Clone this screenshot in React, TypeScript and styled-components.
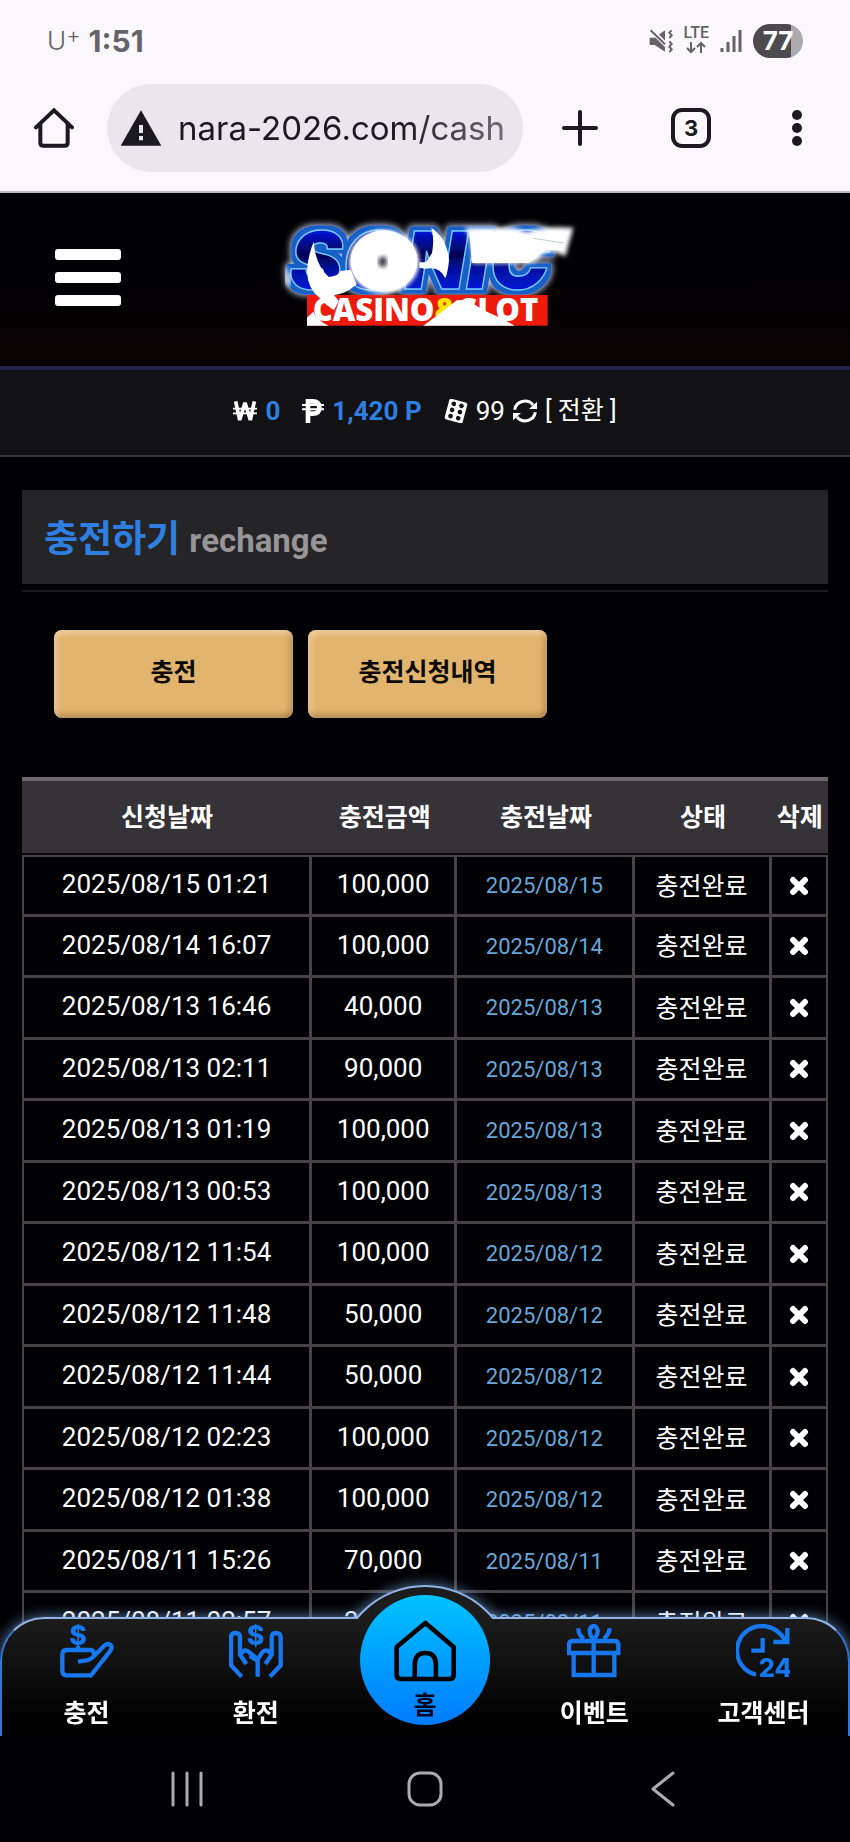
import React, { ReactNode, useState } from 'react'
import styled, { createGlobalStyle, ThemeProvider } from 'styled-components'

interface IDeposit {
    requested: string
    amount: string
    charged: string
}

const theme = {
    chromeBg: '#faf8fd',
    chromeInk: '#1b1a20',
    statusInk: '#656367',
    pageBg: '#010003',
    blue: '#2f7fe0',
    navBlue: '#1677ee',
    line: '#454347',
}

const DEPOSITS: IDeposit[] = [
    { requested: '2025/08/15 01:21', amount: '100,000', charged: '2025/08/15' },
    { requested: '2025/08/14 16:07', amount: '100,000', charged: '2025/08/14' },
    { requested: '2025/08/13 16:46', amount: '40,000', charged: '2025/08/13' },
    { requested: '2025/08/13 02:11', amount: '90,000', charged: '2025/08/13' },
    { requested: '2025/08/13 01:19', amount: '100,000', charged: '2025/08/13' },
    { requested: '2025/08/13 00:53', amount: '100,000', charged: '2025/08/13' },
    { requested: '2025/08/12 11:54', amount: '100,000', charged: '2025/08/12' },
    { requested: '2025/08/12 11:48', amount: '50,000', charged: '2025/08/12' },
    { requested: '2025/08/12 11:44', amount: '50,000', charged: '2025/08/12' },
    { requested: '2025/08/12 02:23', amount: '100,000', charged: '2025/08/12' },
    { requested: '2025/08/12 01:38', amount: '100,000', charged: '2025/08/12' },
    { requested: '2025/08/11 15:26', amount: '70,000', charged: '2025/08/11' },
    { requested: '2025/08/11 02:57', amount: '30,000', charged: '2025/08/11' },
]

function App() {
    const [deposits, setDeposits] = useState(DEPOSITS)

    const onDelete = (requested: string) => {
        setDeposits((rows) => rows.filter((row) => row.requested !== requested))
    }

    return (
        <ThemeProvider theme={theme}>
            <GlobalStyle />
            <Screen>
                <StatusBar />
                <AddressBar />
                <SiteHeader>
                    <MenuButton aria-label='menu'>
                        <MenuLine />
                        <MenuLine />
                        <MenuLine />
                    </MenuButton>
                    <LogoLink href='#home' aria-label='home'>
                        <Logo />
                    </LogoLink>
                </SiteHeader>
                <PointBar />
                <Content>
                    <PageTitle>
                        충전하기 <small>rechange</small>
                    </PageTitle>
                    <Actions>
                        <GoldButton>충전</GoldButton>
                        <GoldButton>충전신청내역</GoldButton>
                    </Actions>
                    <DepositTable deposits={deposits} onDelete={onDelete} />
                </Content>
            </Screen>
            <Dock>
                <BottomNav />
                <SystemBar />
            </Dock>
        </ThemeProvider>
    )
}

function StatusBar() {
    return (
        <StatusRow>
            <Carrier>
                U<sup>+</sup>
            </Carrier>
            <Clock>1:51</Clock>
            <StatusIcons>
                <svg width='24' height='24' viewBox='0 0 72 72'>
                    <path d='M2 26 H17 L48 4 V68 L17 48 H2 Z' fill='#656367' />
                    <path d='M4 2 L52 48' stroke='#faf8fd' strokeWidth='14' />
                    <path d='M5 4 L48 46' stroke='#656367' strokeWidth='6' />
                    <path
                        d='M68 4 l-7 7 7 8 -7 8 M61 37 l7 8 -7 8 7 8 -7 8'
                        fill='none'
                        stroke='#656367'
                        strokeWidth='6'
                    />
                </svg>
                <Lte>
                    LTE
                    <svg width='20' height='13' viewBox='0 0 20 13'>
                        <path
                            d='M5 1 V11 M1 7 L5 11 L9 7 M15 12 V2 M11 6 L15 2 L19 6'
                            fill='none'
                            stroke='#656367'
                            strokeWidth='2'
                        />
                    </svg>
                </Lte>
                <svg width='22' height='24' viewBox='0 0 22 24'>
                    <path d='M2 19 V23 M8 13 V23 M14 7 V23 M20 1 V23' stroke='#656367' strokeWidth='3' />
                </svg>
                <Battery>77</Battery>
            </StatusIcons>
        </StatusRow>
    )
}

function AddressBar() {
    return (
        <AddressRow>
            <ChromeButton aria-label='home page'>
                <svg width='40' height='40' viewBox='0 0 120 120'>
                    <path
                        d='M6 58 L60 7 L114 58 M19 48 V104 Q19 113 28 113 H92 Q101 113 101 104 V48'
                        fill='none'
                        stroke='#1b1a20'
                        strokeWidth='12'
                        strokeLinecap='round'
                        strokeLinejoin='miter'
                    />
                </svg>
            </ChromeButton>
            <UrlPill>
                <svg width='42' height='36' viewBox='0 0 126 106'>
                    <path d='M63 0 L124 106 H2 Z' fill='#1b1a20' />
                    <path d='M63 44 V68 M63 77 V90' stroke='#e9e7ec' strokeWidth='12' />
                </svg>
                <UrlInput aria-label='address' defaultValue='nara-2026.com/cash' />
            </UrlPill>
            <ChromeButton aria-label='new tab'>
                <svg width='36' height='36' viewBox='0 0 36 36'>
                    <path d='M18 2 V34 M2 18 H34' stroke='#1b1a20' strokeWidth='4' strokeLinecap='round' />
                </svg>
            </ChromeButton>
            <TabsButton aria-label='tabs'>3</TabsButton>
            <ChromeButton aria-label='more'>
                <svg width='24' height='40' viewBox='0 0 24 40'>
                    <circle cx='12' cy='7' r='5' fill='#1b1a20' />
                    <circle cx='12' cy='20' r='5' fill='#1b1a20' />
                    <circle cx='12' cy='33' r='5' fill='#1b1a20' />
                </svg>
            </ChromeButton>
        </AddressRow>
    )
}

function Logo() {
    return (
        <svg width='330' height='150' viewBox='0 0 990 450'>
            <defs>
                <filter id='soft' x='-10%' y='-20%' width='120%' height='140%'>
                    <feGaussianBlur stdDeviation='6' />
                </filter>
                {/* blue rim with a pale halo round the word */}
                <filter id='rim' x='-10%' y='-20%' width='120%' height='140%'>
                    <feMorphology in='SourceAlpha' operator='dilate' radius='15' result='wide' />
                    <feGaussianBlur in='wide' stdDeviation='9' result='haze' />
                    <feFlood floodColor='#b3c0dc' />
                    <feComposite in2='haze' operator='in' result='halo' />
                    <feMorphology in='SourceAlpha' operator='dilate' radius='11' result='edge' />
                    <feGaussianBlur in='edge' stdDeviation='2' result='edgeSoft' />
                    <feFlood floodColor='#1560c8' />
                    <feComposite in2='edgeSoft' operator='in' result='blueRim' />
                    <feMerge>
                        <feMergeNode in='halo' />
                        <feMergeNode in='blueRim' />
                        <feMergeNode in='SourceGraphic' />
                    </feMerge>
                </filter>
                <linearGradient id='navy' x1='0' y1='0' x2='0' y2='1'>
                    <stop offset='0.200' stopColor='#0614d8' />
                    <stop offset='0.450' stopColor='#010350' />
                    <stop offset='0.600' stopColor='#0210a0' />
                    <stop offset='0.850' stopColor='#0618e0' />
                </linearGradient>
            </defs>
            <LogoWord x='88' y='265' fill='url(#navy)' stroke='#74c8ff' strokeWidth='4' filter='url(#rim)'>
                SONIC
            </LogoWord>
            <rect x='141' y='282' width='722' height='92' fill='#ee1a0c' />
            <LogoTag x='158' y='361' fill='#fff'>
                CASINO<tspan fill='#ffe600'>&amp;</tspan>SLOT
            </LogoTag>
            <g fill='#fff'>
                <ellipse cx='372' cy='182' rx='106' ry='95' filter='url(#soft)' />
                <ellipse cx='372' cy='180' rx='100' ry='92' />
                <path d='M161 122 Q142 170 141 212 Q143 262 178 290 L200 312 L222 328 L236 300 L222 282 Q256 280 290 250 L272 206 L242 210 Q234 226 206 228 Q166 192 161 122 Z' />
                <path d='M514 80 Q562 112 567 178 Q564 212 556 232 Q540 200 512 202 L494 203 L478 200 V184 L498 184 L516 156 Q524 110 514 80 Z' />
                <path
                    d='M616 80 H760 L800 92 Q850 74 940 80 L916 166 L886 152 Q850 150 838 172 Q828 186 800 187 H636 Q640 130 616 80 Z'
                    filter='url(#soft)'
                />
                <path d='M628 94 H770 L810 104 Q860 90 920 94 L900 148 Q850 140 834 164 L806 186 H636 Z' />
                <path d='M141 374 V350 L160 332 Q168 356 206 374 Z' />
                <path d='M490 374 L560 322 L590 298 L622 296 L668 326 L720 350 L764 374 Z' />
            </g>
            <path d='M820 112 L912 126' stroke='#9bb7ac' strokeWidth='2' />
            <ellipse cx='368' cy='182' rx='13' ry='16' fill='#3d3f4d' filter='url(#soft)' />
            <path d='M78 200 V250 M90 216 V256' stroke='#fff' strokeWidth='8' filter='url(#soft)' />
        </svg>
    )
}

function PointBar() {
    return (
        <PointRow>
            <svg width='24' height='22' viewBox='0 0 72 66'>
                <path
                    d='M8 4 L20 60 L36 8 L52 60 L64 4'
                    fill='none'
                    stroke='#fff'
                    strokeWidth='11'
                    strokeLinejoin='bevel'
                />
                <path d='M0 26 H72 M0 40 H72' stroke='#fff' strokeWidth='5' />
            </svg>
            <Amount>0</Amount>
            <UnitIcon width='22' height='24' viewBox='0 0 66 72'>
                <path d='M18 72 V7 H32 Q52 7 52 26 Q52 44 32 44 H18' fill='none' stroke='#fff' strokeWidth='14' />
                <path d='M0 18 H66 M0 31 H66' stroke='#fff' strokeWidth='6' />
            </UnitIcon>
            <Amount>1,420 P</Amount>
            <UnitIcon width='24' height='24' viewBox='0 0 72 72'>
                <g transform='rotate(15 36 36)'>
                    <rect x='8' y='4' width='56' height='64' rx='7' fill='#fff' />
                    <g fill='#121114'>
                        <circle cx='24' cy='17' r='7' />
                        <circle cx='48' cy='17' r='7' />
                        <circle cx='24' cy='36' r='7' />
                        <circle cx='48' cy='36' r='7' />
                        <circle cx='24' cy='55' r='7' />
                        <circle cx='48' cy='55' r='7' />
                    </g>
                </g>
            </UnitIcon>
            <span>99</span>
            <svg width='24' height='24' viewBox='0 0 72 72'>
                <path
                    d='M5 32 A31 30 0 0 1 60 18 M67 40 A31 30 0 0 1 12 54'
                    fill='none'
                    stroke='#fff'
                    strokeWidth='9'
                />
                <path d='M72 8 V30 H48 Z M0 64 V42 H24 Z' fill='#fff' />
            </svg>
            <SwapLink href='#swap'>[ 전환 ]</SwapLink>
        </PointRow>
    )
}

function DepositTable({ deposits, onDelete }: { deposits: IDeposit[]; onDelete: (requested: string) => void }) {
    return (
        <Table>
            <colgroup>
                <Col $share={36} />
                <Col $share={18} />
                <Col $share={22} />
                <Col $share={17} />
                <Col $share={7} />
            </colgroup>
            <thead>
                <tr>
                    <HeadCell scope='col'>신청날짜</HeadCell>
                    <HeadCell scope='col'>충전금액</HeadCell>
                    <HeadCell scope='col'>충전날짜</HeadCell>
                    <HeadCell scope='col'>상태</HeadCell>
                    <HeadCell scope='col'>삭제</HeadCell>
                </tr>
            </thead>
            <tbody>
                {deposits.map(({ requested, amount, charged }) => (
                    <BodyRow key={requested}>
                        <TextCell>{requested}</TextCell>
                        <TextCell>{amount}</TextCell>
                        <DateCell>{charged}</DateCell>
                        <StateCell>충전완료</StateCell>
                        <Cell>
                            <DeleteButton aria-label={`${requested} 삭제`} onClick={() => onDelete(requested)}>
                                <svg width='20' height='20' viewBox='0 0 20 20'>
                                    <path
                                        d='M4 4 L16 16 M16 4 L4 16'
                                        stroke='#fff'
                                        strokeWidth='6'
                                        strokeLinecap='round'
                                    />
                                </svg>
                            </DeleteButton>
                        </Cell>
                    </BodyRow>
                ))}
            </tbody>
        </Table>
    )
}

function BottomNav() {
    return (
        <Nav>
            <Bump />
            <NavItem id='charge' label='충전'>
                <path d='M54 113 L80 109 Q92 106 100 98 L134 64 Q144 56 152 63 Q158 70 150 82 L93 154 H20 Q7 154 7 141 V91 Q7 78 20 78 H92 Q104 80 102 94 M54 66 V78' />
                <NavGlyph x='54' y='63' fontSize='80' textAnchor='middle'>
                    $
                </NavGlyph>
            </NavItem>
            <NavItem id='withdraw' label='환전'>
                <path d='M38 158 L6 124 V40 Q6 27 20 27 Q33 27 33 40 V92 L52 120 M36 90 Q48 70 62 86 L86 106 V158 M62 96 L86 110' />
                <path d='M123 158 L155 124 V40 Q155 27 141 27 Q128 27 128 40 V92 L109 120 M125 90 Q113 70 99 86 L86 106' />
                <NavGlyph x='80' y='63' fontSize='80' textAnchor='middle'>
                    $
                </NavGlyph>
            </NavItem>
            <HomeSlot>
                <HomeLink href='#home'>
                    <svg width='62' height='62' viewBox='280 150 188 188'>
                        <path
                            d='M375 159 L461 232 V315 Q461 329 447 329 H302 Q288 329 288 315 V232 Z M343 329 V285 Q343 250 375 250 Q407 250 407 285 V329'
                            fill='none'
                            stroke='#000'
                            strokeWidth='14'
                            strokeLinejoin='round'
                        />
                    </svg>
                    홈
                </HomeLink>
            </HomeSlot>
            <NavItem id='event' label='이벤트'>
                <path d='M6 87 V62 Q6 51 18 51 H142 Q154 51 154 62 V87 Z M20 90 V153 H142 V90 M80 51 V153' />
                <path d='M80 48 Q66 30 68 18 Q72 6 80 6 Q88 6 92 18 Q94 30 80 48 M34 13 Q34 32 50 45 M128 13 Q126 32 110 45' />
            </NavItem>
            <NavItem id='support' label='고객센터'>
                <path d='M60 152 A74 74 0 0 1 78 6 Q122 6 150 52 M154 12 V54 H112 M80 42 V80 H46' />
                <NavGlyph x='68' y='159' fontSize='76'>
                    24
                </NavGlyph>
            </NavItem>
        </Nav>
    )
}

function NavItem({ id, label, children }: { id: string; label: string; children: ReactNode }) {
    return (
        <NavLink href={`#${id}`}>
            <NavIcon width='54' height='54' viewBox='0 0 162 162'>
                {children}
            </NavIcon>
            {label}
        </NavLink>
    )
}

function SystemBar() {
    return (
        <SystemRow>
            <SystemButton aria-label='recent apps'>
                <svg width='36' height='36' viewBox='0 0 36 36'>
                    <path d='M4 2 V34 M18 2 V34 M32 2 V34' stroke='#aeabae' strokeWidth='3' strokeLinecap='round' />
                </svg>
            </SystemButton>
            <SystemButton aria-label='home screen'>
                <svg width='36' height='36' viewBox='0 0 36 36'>
                    <rect x='2' y='2' width='32' height='32' rx='11' fill='none' stroke='#aeabae' strokeWidth='3' />
                </svg>
            </SystemButton>
            <SystemButton aria-label='back'>
                <svg width='36' height='36' viewBox='0 0 36 36'>
                    <path
                        d='M28 2 L8 18 L28 34'
                        fill='none'
                        stroke='#aeabae'
                        strokeWidth='3'
                        strokeLinecap='round'
                        strokeLinejoin='round'
                    />
                </svg>
            </SystemButton>
        </SystemRow>
    )
}

const GlobalStyle = createGlobalStyle`
    * {
        box-sizing: border-box;
    }
    body {
        margin: 0;
        background: #010003;
        color: #fff;
        font-family: Roboto, 'Noto Sans CJK KR', sans-serif;
        font-size: 26px;
    }
    button {
        padding: 0;
        border: 0;
        background: none;
        color: inherit;
        font: inherit;
        cursor: pointer;
    }
    a {
        color: inherit;
        text-decoration: none;
    }
    svg {
        display: block;
        flex: none;
    }
`

const Screen = styled.div`
    min-height: 100vh;
    background: ${(props) => props.theme.pageBg};
`

const StatusRow = styled.div`
    display: flex;
    align-items: center;
    height: 81px;
    padding: 0 47px;
    background: ${(props) => props.theme.chromeBg};
    color: ${(props) => props.theme.statusInk};
    font-family: Inter, sans-serif;
`

const Carrier = styled.span`
    display: flex;
    font-size: 26px;
    font-weight: 300;
    line-height: 32px;
    sup {
        font-size: 22px;
        line-height: 20px;
        vertical-align: top;
    }
`

const Clock = styled.span`
    margin-left: 8px;
    font-size: 30px;
    font-weight: 700;
    line-height: 32px;
`

const StatusIcons = styled.div`
    display: flex;
    align-items: center;
    gap: 11px;
    margin-left: auto;
`

const Lte = styled.span`
    display: flex;
    flex-direction: column;
    align-items: center;
    gap: 2px;
    font-family: Roboto, sans-serif;
    font-size: 16px;
    font-weight: 500;
    line-height: 12px;
`

const Battery = styled.span`
    width: 50px;
    border-radius: 17px;
    background: linear-gradient(to right, #4c4a4d 76%, #acaaad 76%);
    color: #fff;
    font-size: 26px;
    font-weight: 700;
    line-height: 34px;
    text-align: center;
`

const AddressRow = styled.div`
    display: flex;
    align-items: center;
    height: 112px;
    padding: 0 41px 16px 34px;
    border-bottom: 2px solid #b9b8bc;
    background: ${(props) => props.theme.chromeBg};
`

const ChromeButton = styled.button`
    display: flex;
`

const UrlPill = styled.div`
    display: flex;
    flex: 1;
    align-items: center;
    min-width: 0;
    height: 88px;
    margin: 0 39px 0 33px;
    padding: 0 18px 0 13px;
    border-radius: 44px;
    background: #e9e7ec;
`

const UrlInput = styled.input`
    flex: 1;
    min-width: 0;
    margin-left: 16px;
    padding: 0;
    border: 0;
    outline: 0;
    background: none;
    color: ${(props) => props.theme.chromeInk};
    font-family: Inter, sans-serif;
    font-size: 33px;
    line-height: 44px;
    mask-image: linear-gradient(to right, #000 68%, rgba(0, 0, 0, 0.6));
`

const TabsButton = styled.button`
    width: 40px;
    height: 40px;
    margin: 0 74px 0 73px;
    border: 4px solid ${(props) => props.theme.chromeInk};
    border-radius: 11px;
    color: ${(props) => props.theme.chromeInk};
    font-family: Inter, sans-serif;
    font-size: 22px;
    font-weight: 700;
    line-height: 32px;
`

const SiteHeader = styled.header`
    display: grid;
    grid-template-columns: 1fr auto 1fr;
    align-items: center;
    height: 177px;
    padding: 0 55px 4px;
    border-bottom: 4px solid #21244a;
    background: linear-gradient(#010003 50%, #090203);
`

const MenuButton = styled.button`
    display: flex;
    flex-direction: column;
    gap: 12px;
    justify-self: start;
    width: 66px;
`

const MenuLine = styled.span`
    height: 11px;
    border-radius: 3px;
    background: #fff;
`

const LogoLink = styled.a`
    padding-bottom: 4px;
`

const LogoWord = styled.text`
    font-family: Inter, sans-serif;
    font-size: 240px;
    font-style: italic;
    font-weight: 900;
`

const LogoTag = styled.text`
    font-family: 'Open Sans', sans-serif;
    font-size: 93px;
    font-weight: 800;
`

const PointRow = styled.div`
    display: flex;
    align-items: center;
    justify-content: center;
    gap: 8px;
    height: 87px;
    padding-bottom: 4px;
    border-bottom: 2px solid #363538;
    background: #121114;
    line-height: 36px;
`

const Amount = styled.strong`
    color: ${(props) => props.theme.blue};
    font-weight: 700;
`

const UnitIcon = styled.svg`
    margin-left: 14px;
`

const SwapLink = styled.a`
    font-size: 25px;
`

const Content = styled.main`
    padding: 33px 22px 0;
`

const PageTitle = styled.h1`
    margin: 0;
    padding: 22px 22px;
    border-bottom: 2px solid #1b1a1c;
    background: linear-gradient(#252427, #252427) top / 100% 94px no-repeat;
    color: ${(props) => props.theme.blue};
    font-size: 37px;
    font-weight: 700;
    line-height: 55px;
    small {
        color: #979598;
        font-size: 33px;
    }
`

const Actions = styled.div`
    display: flex;
    gap: 15px;
    margin: 38px 32px 59px;
`

const GoldButton = styled.button`
    width: 239px;
    height: 88px;
    padding-bottom: 8px;
    border-radius: 8px;
    background: #e2b56e;
    box-shadow: inset 2px 3px 6px rgba(255, 232, 205, 0.6), inset -2px -3px 6px rgba(110, 75, 30, 0.5);
    color: #0d0905;
    font-size: 25px;
    font-weight: 700;
`

const Table = styled.table`
    width: 100%;
    border-spacing: 0;
    table-layout: fixed;
    text-align: center;
`

const Col = styled.col<{ $share: number }>`
    width: ${(props) => props.$share}%;
`

const HeadCell = styled.th`
    height: 78px;
    padding: 0 0 4px;
    border-top: 4px solid #69676b;
    border-bottom: 2px solid #0a090b;
    background: #353337;
    font-size: 25px;
    font-weight: 700;
    white-space: nowrap;
`

const Cell = styled.td`
    padding: 0;
    border-right: 3px solid ${(props) => props.theme.line};
    border-bottom: 3px solid ${(props) => props.theme.line};
    white-space: nowrap;
    &:first-child {
        border-left: 2px solid ${(props) => props.theme.line};
    }
    &:last-child {
        border-right-width: 2px;
    }
`

const TextCell = styled(Cell)`
    padding-bottom: 3px;
`

const DateCell = styled(Cell)`
    color: #66a8dc;
    font-size: 22px;
`

const StateCell = styled(Cell)`
    padding-bottom: 4px;
    font-size: 25px;
`

const BodyRow = styled.tr`
    height: 62px;
    &:nth-child(even) {
        height: 61px;
    }
    &:first-child ${Cell} {
        border-top: 2px solid ${(props) => props.theme.line};
    }
`

const DeleteButton = styled.button`
    display: flex;
    margin: 0 auto;
`

const Dock = styled.div`
    position: fixed;
    right: 0;
    bottom: 0;
    left: 0;
`

const Nav = styled.nav`
    position: relative;
    display: grid;
    grid-template-columns: repeat(5, 1fr);
    height: 119px;
    border: 2px solid;
    border-color: #8fb3e6 #3675cf;
    border-bottom: 0;
    border-radius: 44px 44px 0 0;
    background: linear-gradient(#1c1c1c, #000 90%);
    box-shadow: 0 0 14px rgba(125, 175, 240, 0.7);
`

// only the part above the bar's top line stays visible
const Bump = styled.div`
    position: absolute;
    top: -34px;
    left: 50%;
    width: 178px;
    height: 178px;
    margin-left: -89px;
    border: 2px solid #8fb3e6;
    border-radius: 50%;
    background: #1c1c1c;
    box-shadow: 0 0 14px rgba(125, 175, 240, 0.7);
    clip-path: inset(-20px 0 144px);
`

const NavLink = styled.a`
    display: flex;
    flex-direction: column;
    align-items: center;
    gap: 21px;
    padding-top: 5px;
    font-size: 25px;
    font-weight: 700;
    line-height: 30px;
`

const NavIcon = styled.svg`
    fill: none;
    stroke: ${(props) => props.theme.navBlue};
    stroke-width: 13px;
`

const NavGlyph = styled.text`
    fill: ${(props) => props.theme.navBlue};
    stroke: none;
    font-family: Inter, sans-serif;
    font-weight: 800;
`

const HomeSlot = styled.div`
    position: relative;
    display: flex;
    justify-content: center;
    margin-top: -24px;
`

const HomeLink = styled.a`
    display: flex;
    flex-direction: column;
    align-items: center;
    gap: 9px;
    width: 130px;
    height: 130px;
    padding-top: 25px;
    border-radius: 50%;
    background: linear-gradient(#00c3ff, #007bff);
    color: #02061c;
    font-size: 25px;
    font-weight: 700;
    line-height: 30px;
`

const SystemRow = styled.div`
    position: relative;
    display: flex;
    justify-content: center;
    gap: 202px;
    height: 106px;
    padding-top: 35px;
    background: #010002;
`

const SystemButton = styled.button`
    width: 36px;
    height: 36px;
`

export default App
